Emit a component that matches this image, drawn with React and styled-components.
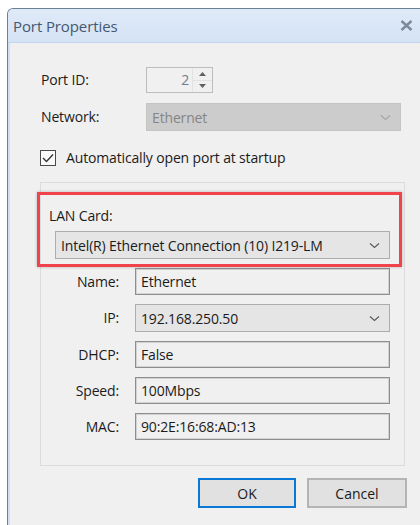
import React from 'react';
import styled, { createGlobalStyle } from 'styled-components';

const GlobalStyle = createGlobalStyle`
  html, body {
    margin: 0;
    padding: 0;
    background: #ffffff;
    overflow: hidden;
  }
  body {
    font-family: "Open Sans", "Noto Sans", sans-serif;
    font-size: 14px;
    letter-spacing: -0.15px;
    color: #1b1b1b;
  }
`;

const Page = styled.div`
  width: 420px;
  height: 525px;
  box-sizing: border-box;
  padding: 8px 0 0 7px;
  overflow: hidden;
`;

const Window = styled.div`
  width: 413px;
  box-sizing: border-box;
  border-top: 1px solid #6b7f98;
  border-left: 1px solid #6b7f98;
  border-top-left-radius: 6px;
  background: #cfe0f4;
  overflow: hidden;
`;

const TitleBar = styled.div`
  height: 33px;
  display: flex;
  align-items: center;
  justify-content: space-between;
  padding: 0 7px 0 5px;
  background: linear-gradient(#dfeaf8, #d4e3f5);
  border-bottom: 1px solid #c3d5ec;
`;

const Title = styled.span`
  font-size: 15px;
  color: #46586f;
  letter-spacing: -0.1px;
`;

const CloseIcon = styled.svg`
  width: 13px;
  height: 11px;
  display: block;
`;

const Frame = styled.div`
  padding-left: 2px;
`;

const Client = styled.div`
  background: #f0f0f0;
  padding: 24px 0 40px 30px;
  min-height: 480px;
`;

const FieldGrid = styled.div`
  display: grid;
  grid-template-columns: 106px 255px;
  row-gap: 10px;
  align-items: center;
`;

const Label = styled.span`
  padding-left: 1px;
  line-height: 18px;
  white-space: nowrap;
`;

const Spin = styled.div`
  width: 67px;
  height: 26px;
  box-sizing: border-box;
  display: flex;
  border: 1px solid #bdbdbd;
  background: #f0f0f0;
`;

const SpinValue = styled.span`
  flex: 1;
  text-align: right;
  padding-right: 3px;
  line-height: 24px;
  color: #6f7e92;
`;

const SpinArrows = styled.div`
  width: 19px;
  display: flex;
  flex-direction: column;
  border-left: 1px solid #e2e2e2;
`;

const SpinArrow = styled.div`
  flex: 1;
  display: flex;
  align-items: center;
  justify-content: center;
  & + & {
    border-top: 1px solid #e2e2e2;
  }
`;

const Combo = styled.div`
  height: 28px;
  box-sizing: border-box;
  display: flex;
  align-items: center;
  justify-content: space-between;
  padding: 0 9px 0 5px;
  border: 1px solid ${(p) => (p.disabled ? '#c4c4c4' : '#adadad')};
  background: ${(p) => (p.disabled ? '#cccccc' : '#e5e5e5')};
  color: ${(p) => (p.disabled ? '#858585' : '#1b1b1b')};
  white-space: nowrap;
`;

const Chevron = styled.svg`
  width: 11px;
  height: 7px;
  display: block;
  flex-shrink: 0;
`;

const CheckRow = styled.label`
  display: flex;
  align-items: center;
  gap: 10px;
  margin-top: 17px;
`;

const CheckBox = styled.span`
  width: 16px;
  height: 16px;
  box-sizing: border-box;
  border: 1px solid #4a4a4a;
  background: #fafafa;
  display: flex;
  align-items: center;
  justify-content: center;
`;

const Group = styled.div`
  width: 365px;
  box-sizing: border-box;
  margin-top: 15px;
  border: 1px solid #dcdcdc;
  padding-bottom: 25px;
`;

const LanSection = styled.div`
  position: relative;
  padding: 23px 14px 9px 7px;

  &::after {
    content: '';
    position: absolute;
    top: 9px;
    bottom: 1px;
    left: -4px;
    right: 2px;
    border: 3px solid #f0434c;
    box-shadow: 0 0 3px rgba(0, 0, 0, 0.25);
    pointer-events: none;
  }
`;

const LanCombo = styled(Combo)`
  margin: 6px 0 0 7px;
`;

const DetailGrid = styled.div`
  display: grid;
  grid-template-columns: 94px 255px;
  row-gap: 9px;
  align-items: center;
`;

const DetailLabel = styled.span`
  text-align: right;
  padding-right: 16px;
  line-height: 18px;
`;

const TextBox = styled.div`
  height: 27px;
  box-sizing: border-box;
  padding: 0 5px;
  line-height: 25px;
  border: 1px solid #8e8e8e;
  box-shadow: inset 0 0 0 1px #d2d2d2;
  background: #f0f0f0;
  white-space: nowrap;
`;

const Buttons = styled.div`
  width: 367px;
  display: flex;
  justify-content: flex-end;
  gap: 11px;
  margin-top: 12px;
`;

const Button = styled.button`
  width: ${(p) => p.$w}px;
  height: 30px;
  box-sizing: border-box;
  font: inherit;
  color: #1b1b1b;
  background: #e1e1e1;
  border: ${(p) => (p.$primary ? '2px solid #0a78d7' : '2px solid #b4b4b4')};
  padding: 0;
`;

const chevron = (
  <Chevron viewBox="0 0 11 7">
    <path d="M1 1.5 L5.5 5.5 L10 1.5" fill="none" stroke="#5c5c5c" strokeWidth="1.2" />
  </Chevron>
);

const details = [
  { label: 'Name:', value: 'Ethernet' },
  { label: 'IP:', value: '192.168.250.50', combo: true },
  { label: 'DHCP:', value: 'False' },
  { label: 'Speed:', value: '100Mbps' },
  { label: 'MAC:', value: '90:2E:16:68:AD:13' },
];

export default function App() {
  return (
    <>
      <GlobalStyle />
      <Page>
        <Window>
          <TitleBar>
            <Title>Port Properties</Title>
            <CloseIcon viewBox="0 0 13 11">
              <path d="M1.5 1 L11.5 10 M11.5 1 L1.5 10" stroke="#7d8898" strokeWidth="2.4" />
            </CloseIcon>
          </TitleBar>
          <Frame>
            <Client>
              <FieldGrid>
                <Label>Port ID:</Label>
                <Spin>
                  <SpinValue>2</SpinValue>
                  <SpinArrows>
                    <SpinArrow>
                      <svg width="7" height="4" viewBox="0 0 7 4">
                        <path d="M0 4 L3.5 0 L7 4 Z" fill="#606060" />
                      </svg>
                    </SpinArrow>
                    <SpinArrow>
                      <svg width="7" height="4" viewBox="0 0 7 4">
                        <path d="M0 0 L3.5 4 L7 0 Z" fill="#606060" />
                      </svg>
                    </SpinArrow>
                  </SpinArrows>
                </Spin>
                <Label>Network:</Label>
                <Combo disabled>
                  <span>Ethernet</span>
                  <Chevron viewBox="0 0 11 7">
                    <path d="M1 1.5 L5.5 5.5 L10 1.5" fill="none" stroke="#a6a6a6" strokeWidth="1.2" />
                  </Chevron>
                </Combo>
              </FieldGrid>

              <CheckRow>
                <CheckBox>
                  <svg width="12" height="10" viewBox="0 0 12 10">
                    <path d="M1 5 L4.5 8.5 L11 1.5" fill="none" stroke="#333" strokeWidth="1.4" />
                  </svg>
                </CheckBox>
                <span>Automatically open port at startup</span>
              </CheckRow>

              <Group>
                <LanSection>
                  <Label>LAN Card:</Label>
                  <LanCombo>
                    <span>Intel(R) Ethernet Connection (10) I219-LM</span>
                    {chevron}
                  </LanCombo>
                </LanSection>
                <DetailGrid>
                  {details.map((d) => (
                    <React.Fragment key={d.label}>
                      <DetailLabel>{d.label}</DetailLabel>
                      {d.combo ? (
                        <Combo>
                          <span>{d.value}</span>
                          {chevron}
                        </Combo>
                      ) : (
                        <TextBox>{d.value}</TextBox>
                      )}
                    </React.Fragment>
                  ))}
                </DetailGrid>
              </Group>

              <Buttons>
                <Button $w={98} $primary>OK</Button>
                <Button $w={100}>Cancel</Button>
              </Buttons>
            </Client>
          </Frame>
        </Window>
      </Page>
    </>
  );
}
